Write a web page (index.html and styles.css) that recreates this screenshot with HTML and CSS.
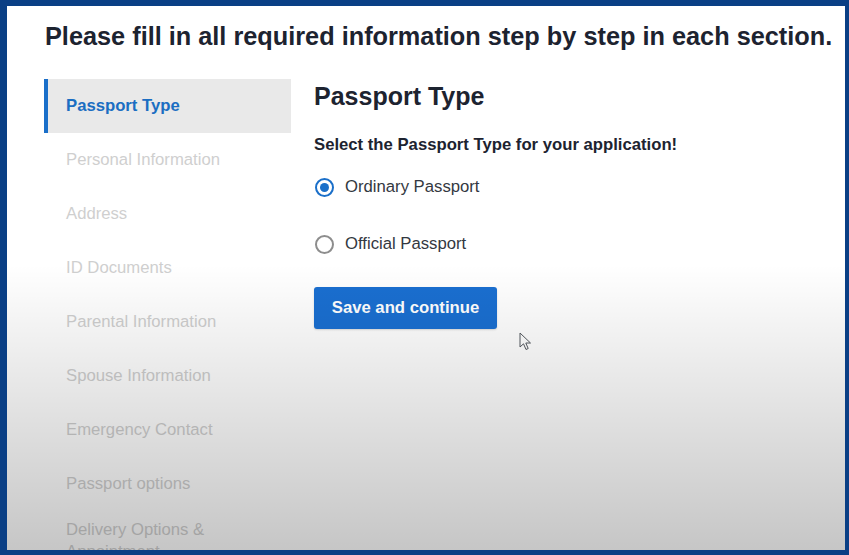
FILE: index.html
```html
<!DOCTYPE html>
<html lang="en">
<head>
<meta charset="utf-8">
<title>Passport Application</title>
<link rel="stylesheet" href="styles.css">
</head>
<body>
<div class="frame">
  <h1 class="title">Please fill in all required information step by step in each section.</h1>
  <div class="layout">
    <nav class="sidebar">
      <div class="nav-item active">Passport Type</div>
      <div class="nav-item">Personal Information</div>
      <div class="nav-item">Address</div>
      <div class="nav-item">ID Documents</div>
      <div class="nav-item">Parental Information</div>
      <div class="nav-item">Spouse Information</div>
      <div class="nav-item">Emergency Contact</div>
      <div class="nav-item">Passport options</div>
      <div class="nav-item multi">Delivery Options &amp; Appointment</div>
    </nav>
    <main class="main">
      <h2 class="section-title">Passport Type</h2>
      <p class="prompt">Select the Passport Type for your application!</p>
      <div class="options">
        <label class="option"><span class="radio checked"></span><span class="option-label">Ordinary Passport</span></label>
        <label class="option"><span class="radio"></span><span class="option-label">Official Passport</span></label>
      </div>
      <button class="btn" type="button">Save and continue</button>
    </main>
  </div>
  <svg class="cursor" width="13" height="19" viewBox="0 0 13 19" aria-hidden="true">
    <path d="M1 1 L1 15 L4.5 11.8 L7 17.5 L9.2 16.5 L6.8 11 L11.5 11 Z" fill="#ffffff" stroke="#555a60" stroke-width="1" stroke-linejoin="round"/>
  </svg>
  <div class="fade"></div>
</div>
</body>
</html>
```
FILE: styles.css
```css
html, body {
  margin: 0;
  padding: 0;
  background: #ffffff;
}

.frame {
  position: relative;
  width: 849px;
  height: 555px;
  box-sizing: border-box;
  border-style: solid;
  border-color: #0a3f85;
  border-width: 6px 4px 5px 7px;
  padding: 15px 0 0 37px;
  overflow: hidden;
  background: #ffffff;
  font-family: "Liberation Sans", Arial, sans-serif;
}

.title {
  margin: 0;
  padding-left: 1px;
  font-size: 25.3px;
  line-height: 30px;
  font-weight: 700;
  color: #1d2330;
  white-space: nowrap;
}

.layout {
  display: flex;
  margin-top: 28px;
}

.sidebar {
  width: 247px;
  flex: none;
  display: flex;
  flex-direction: column;
}

.nav-item {
  height: 54px;
  box-sizing: border-box;
  display: flex;
  align-items: center;
  padding-left: 22px;
  font-size: 16.7px;
  line-height: 22px;
  color: #cfcfcf;
  flex: none;
}

.nav-item.multi {
  align-items: flex-start;
  padding-top: 8px;
}

.nav-item.active {
  background: #e9e9e9;
  border-left: 4px solid #1a6fc9;
  padding-left: 18px;
  color: #1b6ec2;
  font-weight: 700;
}

.main {
  margin-left: 23px;
  padding-top: 2px;
  color: #1d2330;
}

.section-title {
  margin: 0;
  font-size: 25px;
  line-height: 30px;
  font-weight: 700;
  color: #1d2330;
}

.prompt {
  margin: 24px 0 0;
  font-size: 16.7px;
  line-height: 20px;
  font-weight: 700;
  color: #1d2330;
}

.options {
  margin-top: 22px;
  display: flex;
  flex-direction: column;
  gap: 37px;
}

.option {
  display: flex;
  align-items: center;
  gap: 11px;
}

.radio {
  width: 19px;
  height: 19px;
  margin-left: 1px;
  box-sizing: border-box;
  border: 2px solid #8d8d8d;
  border-radius: 50%;
  display: flex;
  align-items: center;
  justify-content: center;
  background: #ffffff;
}

.radio.checked {
  border-color: #1a6fc9;
}

.radio.checked::after {
  content: "";
  width: 9px;
  height: 9px;
  border-radius: 50%;
  background: #1a6fc9;
}

.option-label {
  font-size: 16.7px;
  line-height: 20px;
  color: #333841;
}

.btn {
  margin-top: 33px;
  width: 183px;
  height: 42px;
  border: none;
  border-radius: 3px;
  background: #1a6fd1;
  color: #ffffff;
  font-family: "Liberation Sans", Arial, sans-serif;
  font-size: 16.7px;
  font-weight: 700;
  padding: 0;
  box-shadow: 0 1px 2px rgba(0, 0, 0, 0.15);
}

.cursor {
  position: absolute;
  left: 512px;
  top: 326px;
}

.fade {
  position: absolute;
  left: 0;
  right: 0;
  top: 0;
  bottom: 0;
  pointer-events: none;
  background: linear-gradient(to bottom, rgba(0, 0, 0, 0) 0, rgba(0, 0, 0, 0) 258px, rgba(0, 0, 0, 0.225) 100%);
}
```
